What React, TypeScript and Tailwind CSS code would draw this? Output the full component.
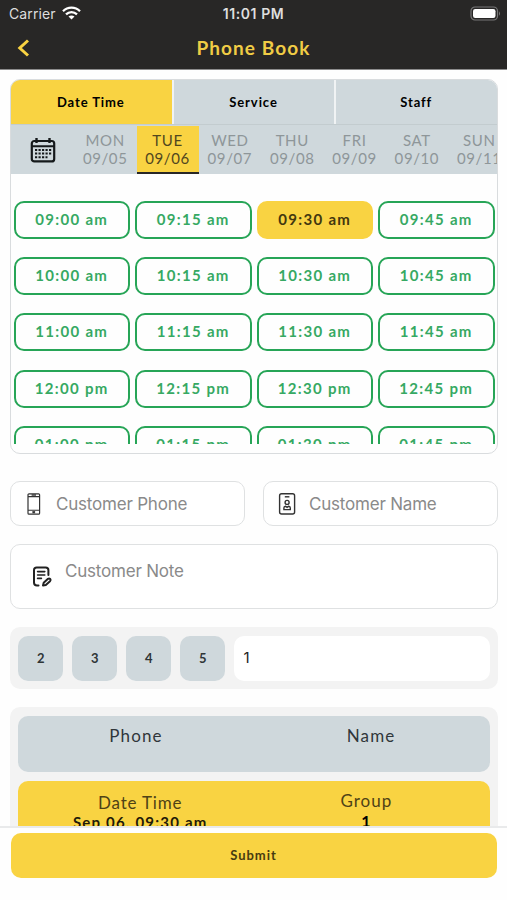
import { useState } from 'react';
import { clsx } from 'clsx';

const TABS = ['Date Time', 'Service', 'Staff'];

const DAYS = [
  { name: 'MON', date: '09/05' },
  { name: 'TUE', date: '09/06' },
  { name: 'WED', date: '09/07' },
  { name: 'THU', date: '09/08' },
  { name: 'FRI', date: '09/09' },
  { name: 'SAT', date: '09/10' },
  { name: 'SUN', date: '09/11' },
];

const HOURS = ['09', '10', '11', '12', '01'];
const MINUTES = ['00', '15', '30', '45'];

const SLOTS = HOURS.flatMap((hour) =>
  MINUTES.map((minute) => `${hour}:${minute} ${hour === '12' || hour === '01' ? 'pm' : 'am'}`),
);

export default function App() {
  const [tab, setTab] = useState('Date Time');
  const [day, setDay] = useState('09/06');
  const [slot, setSlot] = useState('09:30 am');
  const [group, setGroup] = useState('1');

  return (
    <div className="flex h-[900px] w-[507px] flex-col overflow-hidden bg-[#fefefe] font-['Lato',sans-serif] text-black">
      <Header />

      <main className="min-h-0 flex-1 overflow-hidden pt-[9px] pr-[9px] pl-[10px]">
        <section className="h-[375px] overflow-hidden rounded-[10px] border border-[#d9dcde]">
          <div className="flex h-[45px] border-b border-[#c3cccf] bg-[#cfd8dc]">
            {TABS.map((name, i) => (
              <button
                key={name}
                onClick={() => setTab(name)}
                className={clsx(
                  'flex-1 pt-[1px] pr-[1px] text-[13px] leading-none font-bold tracking-[0.9px]',
                  i < 2 && 'border-r-2 border-[#f0f3f4]',
                  tab === name && 'bg-[#f9d342]',
                )}
              >
                {name}
              </button>
            ))}
          </div>

          {/* Day picker */}
          <div className="flex h-[49px] bg-[#cfd8dc]">
            <div className="flex w-[63.5px] shrink-0 items-center justify-center">
              <CalendarIcon />
            </div>
            {DAYS.map((d) => (
              <button
                key={d.date}
                onClick={() => setDay(d.date)}
                className={clsx(
                  'mt-[1px] flex w-[62.35px] shrink-0 flex-col items-center border-b-2 pt-[5px] pr-[1px] text-[15px] leading-[18px] tracking-[0.6px]',
                  day === d.date
                    ? 'border-[#282726] bg-[#f9d342] text-[#51471f]'
                    : 'border-transparent text-[#8e9699]',
                )}
              >
                <span>{d.name}</span>
                <span>{d.date}</span>
              </button>
            ))}
          </div>

          <div className="mt-[27px] h-[243px] overflow-hidden pr-[2.5px] pl-[2.5px]">
            <div className="grid grid-cols-4 gap-x-[5px] gap-y-[18.2px]">
              {SLOTS.map((s) => (
                <button
                  key={s}
                  onClick={() => setSlot(s)}
                  className={clsx(
                    'h-[38px] rounded-[10px] border-2 pb-[1px] text-[15px] leading-none font-bold tracking-[1.3px]',
                    slot === s
                      ? 'border-[#f9d342] bg-[#f9d342] text-[#42370f]'
                      : 'border-[#27a557] text-[#36a963]',
                  )}
                >
                  {s}
                </button>
              ))}
            </div>
          </div>
        </section>

        {/* Customer */}
        <div className="mt-[27px] grid grid-cols-2 gap-[18px]">
          <div className="flex h-[45px] items-center rounded-[10px] border-[1.5px] border-[#dfe1e2] bg-white pl-[13px]">
            <PhoneIcon />
            <Placeholder className="ml-[12px]">Customer Phone</Placeholder>
          </div>
          <div className="flex h-[45px] items-center rounded-[10px] border-[1.5px] border-[#dfe1e2] bg-white pl-[13px]">
            <BadgeIcon />
            <Placeholder className="ml-[12px]">Customer Name</Placeholder>
          </div>
        </div>
        <div className="mt-[18px] flex h-[65px] rounded-[10px] border-[1.5px] border-[#dfe1e2] bg-white pl-[20px]">
          <NoteIcon />
          <Placeholder className="mt-[14px] ml-[12px]">Customer Note</Placeholder>
        </div>

        {/* Group size */}
        <div className="mt-[18px] flex h-[62px] gap-[9px] rounded-[10px] bg-[#f3f3f3] px-[8.4px] py-[8.5px]">
          {['2', '3', '4', '5'].map((n) => (
            <button
              key={n}
              onClick={() => setGroup(n)}
              className="w-[45px] rounded-[10px] bg-[#cfd8dc] pt-[2px] text-[13px] font-bold text-[#2f3537]"
            >
              {n}
            </button>
          ))}
          <div className="flex flex-1 items-center rounded-[10px] bg-white pl-[9px] font-['Inter',sans-serif] text-[15px] text-[#222]">
            {group}
          </div>
        </div>

        {/* Summary */}
        <div className="mt-[18px] rounded-t-[10px] bg-[#f3f3f3] px-[8.4px] pt-[9px]">
          <div className="grid h-[56px] grid-cols-2 rounded-[10px] bg-[#cfd8dc] pt-[9px] pr-[1px] text-center text-[17px] leading-[22px] tracking-[1.1px] text-[#30363a]">
            <span>Phone</span>
            <span>Name</span>
          </div>
          <div className="mt-[9px] grid h-[70px] grid-cols-2 rounded-[10px] bg-[#f9d342] text-center text-[17px] tracking-[1px] text-[#4f4216]">
            <div className="flex flex-col items-center pt-[12px] pl-[8px]">
              <span className="leading-[20px] tracking-[0.8px]">Date Time</span>
              <span className="text-[15px] leading-[18px] font-bold tracking-[1.2px] text-[#1f1a08]">Sep 06, {slot}</span>
            </div>
            <div className="flex flex-col items-center pt-[10px] pr-[11px]">
              <span className="leading-[20px]">Group</span>
              <span className="text-[16px] leading-[20px] font-bold text-black">{group}</span>
            </div>
          </div>
        </div>
      </main>

      <footer className="h-[74px] shrink-0 border-t-2 border-[#e9eaeb] bg-[#fefefe] px-[10.5px] pt-[5px]">
        <button className="h-[45px] w-full rounded-[10px] bg-[#f9d342] text-[13px] font-bold tracking-[1px] text-[#473b10]">
          Submit
        </button>
      </footer>
    </div>
  );
}

function Header() {
  return (
    <header className="h-[70px] shrink-0 border-b border-[#8c8c8c] bg-[#282726]">
      <div className="grid h-[27px] grid-cols-3 items-center px-[9px] font-['Inter',sans-serif] text-[13.5px] text-[#dedede]">
        <div className="flex items-center gap-[6px]">
          <span className="text-[14px] tracking-[0.1px]">Carrier</span>
          <WifiIcon />
        </div>
        <span className="text-center text-[14px] font-semibold tracking-[0.6px]">11:01 PM</span>
        <BatteryIcon />
      </div>
      <div className="grid h-[42px] grid-cols-[40px_1fr_40px] items-center">
        <svg className="ml-[16px]" width="15" height="20" viewBox="0 0 15 20" fill="none">
          <path d="M12 2.5 L3.8 10 L12 17.5" stroke="#f9d342" strokeWidth="3" />
        </svg>
        <h1 className="pb-[2px] text-center text-[19px] leading-none font-bold tracking-[1.1px] text-[#f0cc45]">Phone Book</h1>
      </div>
    </header>
  );
}

function Placeholder({ className, children }: { className?: string; children: string }) {
  return (
    <span className={clsx("font-['Inter',sans-serif] text-[17px] leading-[24px] tracking-[-0.2px] text-[#8a8a8a]", className)}>
      {children}
    </span>
  );
}

function WifiIcon() {
  return (
    <svg className="-mt-[2px]" width="19" height="14" viewBox="0 0 19 14" fill="none" stroke="#fff" strokeWidth="2.3">
      <path d="M1 5.2 C5.7 0.5 13.3 0.5 18 5.2" />
      <path d="M4 8.4 C7.2 5.3 11.8 5.3 15 8.4" />
      <path d="M9.5 13.6 L6.5 10.6 C8.2 9 10.8 9 12.5 10.6 Z" fill="#fff" stroke="none" />
    </svg>
  );
}

function BatteryIcon() {
  return (
    <svg className="-mt-[1px] -mr-[5px] justify-self-end" width="33" height="15" viewBox="0 0 33 15">
      <rect x="1" y="1" width="26.5" height="13" rx="4" fill="none" stroke="#777" strokeWidth="1.2" />
      <rect x="3" y="3" width="22.5" height="9" rx="2.2" fill="#fff" />
      <path d="M29 5.2 Q31 7.5 29 9.8 Z" fill="#777" />
    </svg>
  );
}

function CalendarIcon() {
  return (
    <svg width="26" height="26" viewBox="0 0 26 26" fill="none" stroke="#15191b">
      <rect x="1.8" y="4" width="22.4" height="20.4" rx="2.5" strokeWidth="2.2" />
      <path d="M2 9.3 H24" strokeWidth="2" />
      <path d="M6.5 1 V6 M19.5 1 V6" strokeWidth="2.4" />
      <path d="M5 13 H21.5 M5 16.6 H21.5 M5 20.2 H17.5" strokeWidth="2" strokeDasharray="2.2 1.3" />
    </svg>
  );
}

function PhoneIcon() {
  return (
    <svg width="20" height="24" viewBox="0 0 20 24" fill="none" stroke="#333">
      <rect x="4" y="1.8" width="11.6" height="20.4" rx="1" strokeWidth="1.2" />
      <path d="M4 4.6 H15.6 M4 18.2 H15.6" strokeWidth="1.1" />
      <path d="M7.6 3 H12" strokeWidth="1.4" />
      <rect x="8.8" y="19.4" width="2" height="1.6" fill="#333" strokeWidth="0.6" />
    </svg>
  );
}

function BadgeIcon() {
  return (
    <svg width="20" height="24" viewBox="0 0 20 24" fill="none" stroke="#333" strokeWidth="1.4">
      <rect x="2.6" y="1.8" width="15" height="20.2" rx="2" />
      <path d="M7.8 4.8 H12.4" />
      <circle cx="10.1" cy="10.4" r="2" />
      <path d="M6.9 17.6 V16 Q6.9 14.2 8.5 14.2 L10.1 15.4 L11.7 14.2 Q13.3 14.2 13.3 16 V17.6 Z" />
    </svg>
  );
}

function NoteIcon() {
  return (
    <svg className="mt-[20px]" width="22" height="22" viewBox="0 0 22 22" fill="none" stroke="#222" strokeWidth="2" strokeLinecap="round" strokeLinejoin="round">
      <path d="M7.5 20.6 H6 Q3 20.6 3 17.6 V5 Q3 2.4 5.7 2.4 H14.6 Q17.4 2.4 17.4 5 V10" />
      <path d="M6.6 6.6 H13.8 M6.6 10 H13.8 M6.6 13.4 H10.4" strokeWidth="1.6" />
      <path d="M12 20.6 L12.7 17.8 L17 13.8 Q18.2 13 19.2 14 Q20.1 15.1 19 16.2 L14.8 20 Z" />
    </svg>
  );
}
